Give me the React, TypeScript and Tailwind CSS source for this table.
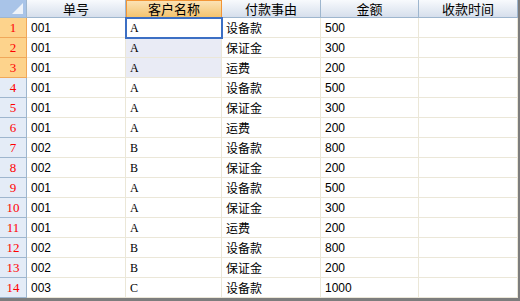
import React from "react";

const rows: [string, string, string, string][] = [
  ["001", "A", "设备款", "500"],
  ["001", "A", "保证金", "300"],
  ["001", "A", "运费", "200"],
  ["001", "A", "设备款", "500"],
  ["001", "A", "保证金", "300"],
  ["001", "A", "运费", "200"],
  ["002", "B", "设备款", "800"],
  ["002", "B", "保证金", "200"],
  ["001", "A", "设备款", "500"],
  ["001", "A", "保证金", "300"],
  ["001", "A", "运费", "200"],
  ["002", "B", "设备款", "800"],
  ["002", "B", "保证金", "200"],
  ["003", "C", "设备款", "1000"],
];

const headers = ["单号", "客户名称", "付款事由", "金额", "收款时间"];

const cjk = "font-['Noto_Sans_CJK_SC','Noto_Sans',sans-serif]";

export default function App() {
  return (
    <div className="w-[520px] h-[301px] bg-[#7d7d7d] overflow-hidden">
      <div className="relative w-[518px] h-[298px] bg-white border-r-0">
        <div className="grid grid-cols-[27px_99px_96px_99px_98px_99px] grid-rows-[18px_repeat(14,20px)]">
          {/* corner */}
          <div className="relative bg-[#a9c4e8] border-r border-b border-[#9eb6ce]">
            <div className="absolute right-[3px] bottom-[3px] w-0 h-0 border-l-[11px] border-l-transparent border-b-[11px] border-b-[#eef3fa]" />
          </div>
          {headers.map((h, i) =>
            i === 1 ? (
              <div
                key={h}
                className={`flex items-center justify-center bg-gradient-to-b from-[#fbe2b4] to-[#f4c46e] border border-[#f29536] text-[13px] text-black ${cjk}`}
              >
                {h}
              </div>
            ) : (
              <div
                key={h}
                className={`flex items-center justify-center bg-gradient-to-b from-[#f8fafd] to-[#d6dfec] border-r border-b border-[#9eb6ce] text-[13px] text-black ${cjk}`}
              >
                {h}
              </div>
            )
          )}
          {rows.map((r, idx) => {
            const sel = idx < 3;
            return (
              <React.Fragment key={idx}>
                <div
                  className={
                    sel
                      ? "flex items-center justify-center bg-[#fdd38c] border-r border-b border-[#f0a85a] text-[13px] text-[#ff0000] font-['Liberation_Serif',serif]"
                      : "flex items-center justify-center bg-[#e4ecf7] border-r border-b border-[#9eb6ce] text-[13px] text-[#ff0000] font-['Liberation_Serif',serif]"
                  }
                >
                  {idx + 1}
                </div>
                <div className="flex items-center pl-[4px] border-r border-b border-[#ebe7d8] text-[12px] text-black font-['Liberation_Sans',sans-serif]">
                  {r[0]}
                </div>
                <div
                  className={`flex items-center pl-[4px] border-r border-b border-[#ebe7d8] text-[12px] text-black font-['Liberation_Serif',serif] ${
                    idx === 1 || idx === 2 ? "bg-[#e9ebf5]" : ""
                  }`}
                >
                  {r[1]}
                </div>
                <div className={`flex items-center pl-[4px] border-r border-b border-[#ebe7d8] text-[12px] text-black ${cjk}`}>
                  {r[2]}
                </div>
                <div className="flex items-center pl-[4px] border-r border-b border-[#ebe7d8] text-[12px] text-black font-['Liberation_Sans',sans-serif]">
                  {r[3]}
                </div>
                <div className="border-r border-b border-[#ebe7d8]" />
              </React.Fragment>
            );
          })}
        </div>
        {/* active cell outline */}
        <div className="absolute left-[125px] top-[17px] w-[98px] h-[22px] border-2 border-[#3c6fc4] pointer-events-none" />
      </div>
    </div>
  );
}
